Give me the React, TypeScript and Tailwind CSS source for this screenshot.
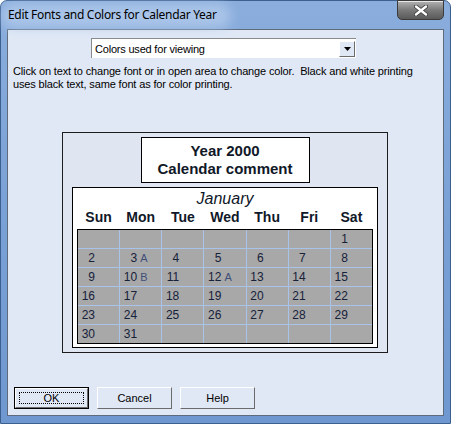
import React from "react";

const days = ["Sun", "Mon", "Tue", "Wed", "Thu", "Fri", "Sat"];

// January 2000 starts on a Saturday
const cells: { n?: number; mark?: string }[] = [
  ...Array.from({ length: 6 }, () => ({})),
  ...Array.from({ length: 31 }, (_, i) => ({
    n: i + 1,
    mark: i + 1 === 3 ? "A" : i + 1 === 10 ? "B" : i + 1 === 12 ? "A" : undefined,
  })),
  ...Array.from({ length: 5 }, () => ({})),
];

function Button({ label, isDefault }: { label: string; isDefault?: boolean }) {
  return (
    <div
      className={
        "w-[75px] h-[22px] " +
        (isDefault ? "border border-black" : "")
      }
    >
      <div className="w-full h-full border-t border-l border-t-white border-l-white border-b border-r border-b-[#6b6b6b] border-r-[#6b6b6b] bg-[#e0e8f5] flex items-center justify-center">
        {isDefault ? (
          <div className="w-[calc(100%-6px)] h-[calc(100%-6px)] border border-dotted border-black flex items-center justify-center">
            {label}
          </div>
        ) : (
          label
        )}
      </div>
    </div>
  );
}

export default function App() {
  return (
    <div className="w-[451px] h-[424px] bg-white overflow-hidden">
      <div className="w-full h-full rounded-t-[7px] border border-[#3b5f8f] bg-gradient-to-b from-[#8aaddc] via-[#7aa1d6] to-[#6f98d0] flex flex-col">
        {/* title bar */}
        <div className="h-[28px] shrink-0 flex items-start justify-between relative">
          <div className="absolute left-0 top-[2px] w-[230px] h-[26px] rounded-full bg-[#b8cfee] opacity-70 blur-[6px]" />
          <span className="relative mt-[7px] ml-[7px] text-[12px] leading-[14px] text-black font-['Noto_Sans',sans-serif] tracking-[-0.3px]">
            Edit Fonts and Colors for Calendar Year
          </span>
          <div className="relative mr-[6px] -mt-px w-[47px] h-[20px] rounded-b-[5px] border border-[#3a3a3a] bg-gradient-to-b from-[#b4b4b4] via-[#7a7a7a] to-[#5a5a5a] flex items-center justify-center shadow-[inset_0_1px_0_#e8e8e8]">
            <svg width="14" height="11" viewBox="0 0 14 11">
              <path d="M2 1.5 L12 9.5 M12 1.5 L2 9.5" stroke="#3a3a3a" strokeWidth="4" strokeLinecap="round" />
              <path d="M2 1.5 L12 9.5 M12 1.5 L2 9.5" stroke="#ffffff" strokeWidth="2.4" strokeLinecap="round" />
            </svg>
          </div>
        </div>

        {/* client area */}
        <div className="mx-[6px] mb-[7px] flex-1 border border-[#5e6b7d] bg-[#e0e8f5] flex flex-col font-['Liberation_Sans',sans-serif] text-[11px] text-black">
          {/* dropdown */}
          <div className="ml-[83px] mt-[8px] w-[265px] h-[20px] border-t border-l border-[#8a8a8a] border-b-white border-r-white bg-white flex items-center">
            <span className="ml-[3px] flex-1 text-[11px] leading-[14px] tracking-[-0.2px]">Colors used for viewing</span>
            <div className="mr-px w-[16px] h-[16px] bg-[#e0e8f5] border-t border-l border-t-white border-l-white border-b border-r border-b-[#6b6b6b] border-r-[#6b6b6b] flex items-center justify-center">
              <svg width="7" height="4" viewBox="0 0 7 4">
                <path d="M0 0 H7 L3.5 4 Z" fill="black" />
              </svg>
            </div>
          </div>

          <p className="ml-[5px] mt-[7px] text-[11px] leading-[13px] tracking-[-0.15px]">
            Click on text to change font or in open area to change color.&nbsp; Black and white printing
            <br />
            uses black text, same font as for color printing.
          </p>

          {/* calendar panel */}
          <div className="ml-[54px] mt-[41px] w-[326px] h-[221px] border border-[#1c1c1c] bg-[#dfe6f1] flex flex-col items-center font-['Liberation_Sans',sans-serif]">
            <div className="mt-[4px] w-[169px] h-[46px] border border-black bg-white flex flex-col items-center justify-center font-bold text-[15px] leading-[18px] text-[#101828]">
              <span>Year 2000</span>
              <span>Calendar comment</span>
            </div>
            <div className="mt-[4px] w-[306px] h-[161px] border border-black bg-white flex flex-col items-center">
              <div className="mt-[1px] italic text-[16px] leading-[19px] text-[#101828]">January</div>
              <div className="w-[295px] grid grid-cols-7 font-bold text-[14px] leading-[19px] text-[#101828]">
                {days.map((d) => (
                  <div key={d} className="text-center">
                    {d}
                  </div>
                ))}
              </div>
              <div className="mt-[2px] w-[296px] border border-black bg-[#a9c3ea] grid grid-cols-7 gap-px">
                {cells.map((c, i) => (
                  <div key={i} className="h-[18px] bg-[#a8a8a8] flex items-center text-[12px] text-[#16213a]">
                    {c.n !== undefined && (
                      <>
                        <span className="w-[16px] ml-[1px] text-right">{c.n}</span>
                        {c.mark && (
                          <span className="ml-[3px] text-[11px] text-[#3f4f78]">{c.mark}</span>
                        )}
                      </>
                    )}
                  </div>
                ))}
              </div>
            </div>
          </div>

          {/* buttons */}
          <div className="mt-auto mb-[6px] ml-[6px] flex gap-[8px] text-[11px]">
            <Button label="OK" isDefault />
            <Button label="Cancel" />
            <Button label="Help" />
          </div>
        </div>
      </div>
    </div>
  );
}
